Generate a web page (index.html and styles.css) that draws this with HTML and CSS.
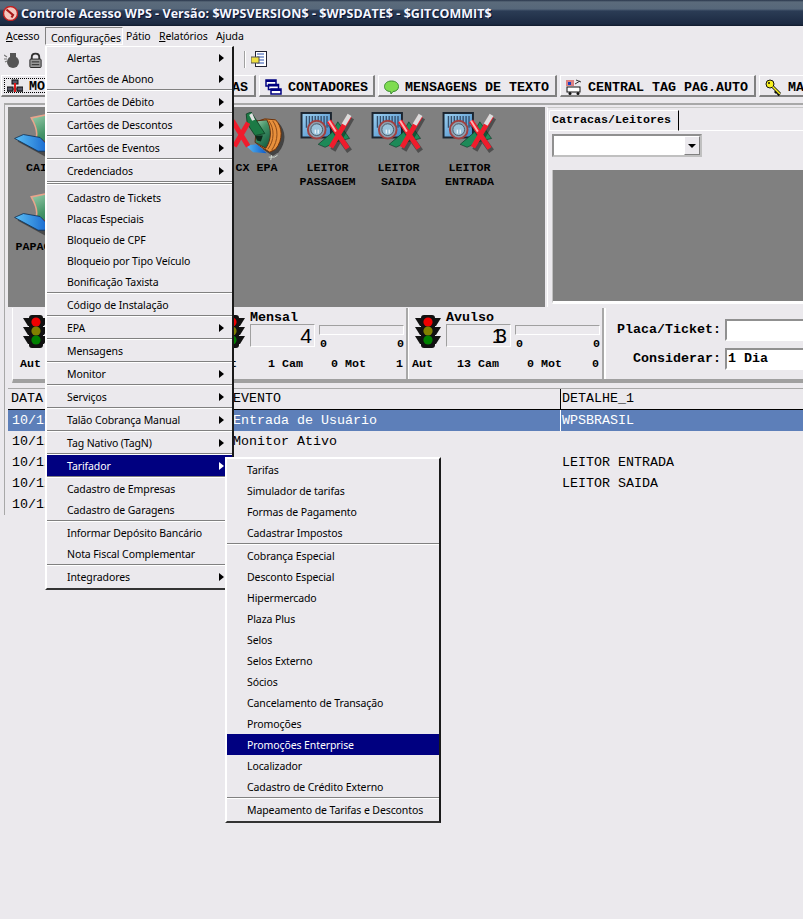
FILE: index.html
```html
<!DOCTYPE html>
<html lang="pt-BR">
<head>
<meta charset="utf-8">
<title>Controle Acesso WPS</title>
<link rel="stylesheet" href="styles.css">
</head>
<body>
<svg class="defs" width="0" height="0" aria-hidden="true">
  <defs>
    <linearGradient id="g-card" x1="0" y1="0" x2=".6" y2="1"><stop offset="0" stop-color="#9fcfb0"/><stop offset=".45" stop-color="#459468"/><stop offset="1" stop-color="#176244"/></linearGradient>
    <linearGradient id="g-blue" x1="0" y1="0" x2="1" y2="0"><stop offset="0" stop-color="#5cc0f4"/><stop offset="1" stop-color="#0c58c8"/></linearGradient>
    <linearGradient id="g-box" x1="0" y1="0" x2="1" y2="1"><stop offset="0" stop-color="#9fd0f0"/><stop offset="1" stop-color="#3f88c8"/></linearGradient>
    <symbol id="i-card" viewBox="0 0 60 50">
      <path d="M3 30 L12 26 L34 32 L48 46 L32 46 Z" fill="#111" opacity=".5"/>
      <path d="M17 6 L36 2 L62 3 L62 46 L38 38 L22 26 C24 20 21 13 17 6 Z" fill="url(#g-card)" stroke="#e8a48c" stroke-width="1.600"/>
      <path d="M22 26 L40 36 L50 43" fill="none" stroke="#e83c18" stroke-width="2"/>
      <path d="M0 27 L9 23 L26 26 L40 40 L24 40 Z" fill="url(#g-blue)" stroke="#0a2a50" stroke-width=".8"/>
    </symbol>
    <symbol id="i-cx" viewBox="0 0 60 50">
      <path d="M33 10 L38 8 L50 9 C57 16 59 28 50 39 L44 43 L34 36 Z" fill="#111" opacity=".55" transform="translate(2 2)"/>
      <path d="M32 9 L38 7 L49 8 C56 15 57 28 49 38 L43 41 L30 33 Z" fill="#e8903c" stroke="#6a3008" stroke-width="1"/>
      <path d="M46 9 C52 17 52 29 45 39 M42 9 C48 17 48 29 41 38" fill="none" stroke="#8a4a18" stroke-width="1"/>
      <path d="M30 9 L40 8 C45 17 45 28 39 37 L28 31 Z" fill="url(#g-card)" stroke="#5a2a10" stroke-width="1"/>
      <path d="M28 24 L36 24 L34 30 L30 29 Z" fill="#0c2a1c"/>
      <path d="M18 34 L30 33 L40 42 L26 41 Z" fill="url(#g-blue)"/>
      <path d="M19 2 L24 0 L38 22 L28 24 L20 12 Z" fill="#1c7a45" stroke="#0c3a20" stroke-width=".8"/>
      <path d="M22 3 L25 1 L28 8 L25 9 Z" fill="#e0e0e0"/>
      <path d="M5 9 L21 35 M21 11 L7 35" stroke="#f01c2c" stroke-width="5" fill="none"/>
      <path d="M42 46 L48 46 M45 44 L44 49 M48 46 L51 44" stroke="#cfd8cf" stroke-width="1" fill="none"/>
    </symbol>
    <symbol id="i-leitor" viewBox="0 0 60 50">
      <rect x="3" y="1" width="30" height="25" fill="url(#g-box)" stroke="#1c2530" stroke-width="2"/>
      <path d="M8 4 V16 M11 4 V16 M14 4 V16 M17 4 V16 M20 4 V16 M23 4 V16 M26 4 V16 M29 4 V16" stroke="#35506e" stroke-width="1.400"/>
      <circle cx="18.500" cy="18" r="9" fill="#8fa0b0" stroke="#a04040" stroke-width="2"/>
      <circle cx="18.500" cy="18" r="6" fill="#9cc4dc" stroke="#4a5a68"/>
      <path d="M17 18 V22 M20 18 V22" stroke="#fff"/>
      <path d="M20 33 L34 21 L40 10 L52 27 L40 30 L27 36 Z" fill="#1d8a58" stroke="#0a3020" stroke-width=".6"/>
      <path d="M54 6 L35 39 M32 12 L52 40" stroke="#111" stroke-width="6" opacity=".45" fill="none"/>
      <path d="M52 4 L33 36 M31 9 L50 37" stroke="#f01c2c" stroke-width="5" fill="none"/>
      <path d="M52 3 L46 13" stroke="#dcdcdc" stroke-width="4.500" fill="none"/>
      <path d="M31 9 L38 20" stroke="#ffb0b0" stroke-width="2" fill="none"/>
    </symbol>
    <symbol id="i-light" viewBox="0 0 26 33">
      <g fill="#111">
        <path d="M0 3 H26 L21 11 H5 Z M0 12 H26 L21 20 H5 Z M0 21 H26 L21 29 H5 Z"/>
        <rect x="6" y="0" width="14" height="33" rx="3"/>
      </g>
      <circle cx="13" cy="7" r="4.600" fill="#f00000"/>
      <circle cx="13" cy="16" r="4.600" fill="#808000"/>
      <circle cx="13" cy="25" r="4.600" fill="#008000"/>
    </symbol>
  </defs>
</svg>

<div class="window">
  <header class="titlebar">
    <svg class="title-icon" width="15" height="15" viewBox="0 0 15 15"><circle cx="7.500" cy="7.500" r="7" fill="#f4c8c0" stroke="#c02020" stroke-width="1.400"/><path d="M3.500 3.500 L10 9 L8.500 11.500" fill="none" stroke="#a81818" stroke-width="2.200"/></svg>
    <span class="title-text">Controle Acesso WPS - Versão: $WPSVERSION$ - $WPSDATE$ - $GITCOMMIT$</span>
  </header>

  <nav class="menubar">
    <span class="top-item item-acesso"><u>A</u>cesso</span>
    <span class="top-item item-open">Configurações</span>
    <span class="top-item item-patio">Pátio</span>
    <span class="top-item item-rel"><u>R</u>elatórios</span>
    <span class="top-item item-ajuda">Ajuda</span>
  </nav>

  <div class="toolbar">
    <svg class="tool" width="16" height="16" viewBox="0 0 16 16"><ellipse cx="9" cy="10" rx="6" ry="6" fill="#555"/><rect x="6" y="1" width="6" height="5" fill="#555"/><path d="M0 3 L3 5 M0 7 H3 M1 10 L3 9" stroke="#777" stroke-width="1.200"/></svg>
    <svg class="tool tool-lock" width="15" height="16" viewBox="0 0 16 16"><path d="M4 8 V5 C4 0 12 0 12 5 V8" fill="none" stroke="#333" stroke-width="2"/><rect x="2" y="7" width="12" height="9" rx="1" fill="#999" stroke="#222"/><path d="M4 10 H12 M4 13 H12" stroke="#222"/></svg>
    <span class="tool-gap"></span>
    <span class="tool-sep"></span>
    <svg class="tool" width="17" height="17" viewBox="0 0 17 17"><rect x="4.500" y=".5" width="11" height="15" fill="#fff" stroke="#223"/><path d="M6 3 H13 M6 6 H13 M6 9 H13 M6 12 H13" stroke="#2a50b0"/><rect x="0" y="6" width="8" height="6" fill="#f0e040" stroke="#555"/></svg>
  </div>

  <div class="tabs">
    <div class="tab tab-active"><span class="tab-focus">
      <svg class="tab-icon" width="16" height="16" viewBox="0 0 16 16"><path d="M5 4 H11 M2 10 H14 M8 4 V14" stroke="#222" fill="none"/><rect x="5" y="1" width="6" height="4" fill="#556" stroke="#111"/><rect x="0" y="8" width="6" height="4" fill="#556" stroke="#111"/><rect x="10" y="8" width="6" height="4" fill="#556" stroke="#111"/><rect x="0" y="13" width="6" height="3" fill="#556" stroke="#111"/><rect x="10" y="13" width="6" height="3" fill="#556" stroke="#111"/><rect x="7" y="4" width="2" height="12" fill="#e01818"/></svg>
      MONITOR</span></div>
    <div class="tab tab-wide">CÂMERAS</div>
    <div class="tab tab-tight">
      <svg class="tab-icon" width="17" height="16" viewBox="0 0 17 16"><rect x="1" y="1" width="10" height="6" fill="#fff" stroke="#000080" stroke-width="1.500"/><rect x="3.500" y="5.500" width="10" height="5" fill="#fff" stroke="#000080" stroke-width="1.500"/><rect x="6" y="10" width="10" height="5" fill="#fff" stroke="#000080" stroke-width="1.500"/><path d="M1 2 H11 M4 6.500 H14 M6 11 H16" stroke="#000080" stroke-width="2"/></svg>
      CONTADORES</div>
    <div class="tab">
      <svg class="tab-icon" width="15" height="15" viewBox="0 0 15 15"><path d="M7.500 1 C12 1 14.500 3.500 14.500 6.500 C14.500 9.500 12 11.500 9 11.500 L7 14 L6.500 11.500 C3 11.500 .5 9.500 .5 6.500 C.5 3.500 3 1 7.500 1 Z" fill="#7fdc50" stroke="#3a8a30"/></svg>
      MENSAGENS DE TEXTO</div>
    <div class="tab">
      <svg class="tab-icon" width="16" height="16" viewBox="0 0 16 16"><path d="M1 1 V7 M3 1 V7 M5 1 V7 M7 1 V7" stroke="#d01818"/><rect x="2" y="3" width="3" height="3" fill="#1840c0"/><path d="M10 1 L15 3 M9 5 L14 2" stroke="#333"/><rect x="1" y="8" width="13" height="5" fill="#fff" stroke="#111"/><circle cx="4" cy="14.500" r="1.500" fill="#111"/><circle cx="12" cy="14.500" r="1.500" fill="#111"/></svg>
      CENTRAL TAG PAG.AUTO</div>
    <div class="tab">
      <svg class="tab-icon" width="17" height="17" viewBox="0 0 17 17"><circle cx="5" cy="5" r="4" fill="#f8f020" stroke="#111"/><circle cx="4" cy="4" r="1" fill="#111"/><path d="M7.500 7.500 L15 15 M12 12 L10 14 M14.500 14.500 L12.500 16" stroke="#111" stroke-width="3"/><path d="M7.500 7.500 L15 15" stroke="#f8f020" stroke-width="1.500"/></svg>
      MANUTENÇÃO</div>
  </div>

  <main class="workspace">
    <section class="upper">
      <div class="gray-panel">
        <div class="app"><svg class="app-icon"><use href="#i-card"/></svg><span class="app-label">CAIXA</span></div>
        <div class="app"><svg class="app-icon"><use href="#i-card"/></svg><span class="app-label">CAIXA 2</span></div>
        <div class="app"><svg class="app-icon"><use href="#i-card"/></svg><span class="app-label">CAIXA 3</span></div>
        <div class="app"><svg class="app-icon"><use href="#i-cx"/></svg><span class="app-label">CX EPA</span></div>
        <div class="app"><svg class="app-icon"><use href="#i-leitor"/></svg><span class="app-label">LEITOR PASSAGEM</span></div>
        <div class="app"><svg class="app-icon"><use href="#i-leitor"/></svg><span class="app-label">LEITOR SAIDA</span></div>
        <div class="app"><svg class="app-icon"><use href="#i-leitor"/></svg><span class="app-label">LEITOR ENTRADA</span></div>
        <div class="app"><svg class="app-icon"><use href="#i-card"/></svg><span class="app-label">PAPAGAIO</span></div>
      </div>
      <aside class="side">
        <div class="side-tabs"><span class="side-tab">Catracas/Leitores</span></div>
        <div class="combo"><span class="combo-field"></span><span class="combo-btn"></span></div>
        <div class="side-box"></div>
      </aside>
    </section>

    <section class="stats">
      <div class="card">
        <div class="card-top">
          <svg class="light"><use href="#i-light"/></svg>
          <div class="meter"><div class="meter-title">Isento</div><div class="meter-box">0</div></div>
          <div class="bar-col"><div class="bar"></div><div class="bar-scale"><span>0</span><span>0</span></div></div>
        </div>
        <div class="card-row"><span>Aut</span><span class="num">0 Cam</span><span class="num">0 Mot</span><span class="num">0</span></div>
      </div>
      <div class="card">
        <div class="card-top">
          <svg class="light"><use href="#i-light"/></svg>
          <div class="meter"><div class="meter-title">Mensal</div><div class="meter-box">4</div></div>
          <div class="bar-col"><div class="bar"></div><div class="bar-scale"><span>0</span><span>0</span></div></div>
        </div>
        <div class="card-row"><span>Aut</span><span class="num">1 Cam</span><span class="num">0 Mot</span><span class="num">1</span></div>
      </div>
      <div class="card">
        <div class="card-top">
          <svg class="light"><use href="#i-light"/></svg>
          <div class="meter"><div class="meter-title">Avulso</div><div class="meter-box meter-tight">13</div></div>
          <div class="bar-col"><div class="bar"></div><div class="bar-scale"><span>0</span><span>0</span></div></div>
        </div>
        <div class="card-row"><span>Aut</span><span class="num">13 Cam</span><span class="num">0 Mot</span><span class="num">0</span></div>
      </div>
      <div class="search">
        <label class="search-label">Placa/Ticket:</label><div class="field"></div>
        <label class="search-label">Considerar:</label><div class="field">1 Dia</div>
      </div>
    </section>

    <section class="log">
      <div class="log-row log-head"><span class="c-date">DATA</span><span class="c-event">EVENTO</span><span class="c-det">DETALHE_1</span></div>
      <div class="log-row log-sel"><span class="c-date">10/12/2013</span><span class="c-event">Entrada de Usuário</span><span class="c-det">WPSBRASIL</span></div>
      <div class="log-row"><span class="c-date">10/12/2013</span><span class="c-event">Monitor Ativo</span><span class="c-det"></span></div>
      <div class="log-row"><span class="c-date">10/12/2013</span><span class="c-event"></span><span class="c-det">LEITOR ENTRADA</span></div>
      <div class="log-row"><span class="c-date">10/12/2013</span><span class="c-event"></span><span class="c-det">LEITOR SAIDA</span></div>
      <div class="log-row"><span class="c-date">10/12/2013</span><span class="c-event"></span><span class="c-det"></span></div>
    </section>
  </main>
</div>

<div class="menu menu-main">
  <div class="mi sub">Alertas</div>
  <div class="mi sub">Cartões de Abono</div>
  <div class="ms"></div>
  <div class="mi sub">Cartões de Débito</div>
  <div class="ms"></div>
  <div class="mi sub">Cartões de Descontos</div>
  <div class="ms"></div>
  <div class="mi sub">Cartões de Eventos</div>
  <div class="ms"></div>
  <div class="mi sub">Credenciados</div>
  <div class="ms ms-double"></div>
  <div class="ms ms-double-b"></div>
  <div class="mi">Cadastro de Tickets</div>
  <div class="mi">Placas Especiais</div>
  <div class="mi">Bloqueio de CPF</div>
  <div class="mi">Bloqueio por Tipo Veículo</div>
  <div class="mi">Bonificação Taxista</div>
  <div class="ms"></div>
  <div class="mi">Código de Instalação</div>
  <div class="ms"></div>
  <div class="mi sub">EPA</div>
  <div class="ms"></div>
  <div class="mi">Mensagens</div>
  <div class="ms"></div>
  <div class="mi sub">Monitor</div>
  <div class="ms"></div>
  <div class="mi sub">Serviços</div>
  <div class="ms"></div>
  <div class="mi sub">Talão Cobrança Manual</div>
  <div class="ms"></div>
  <div class="mi sub">Tag Nativo (TagN)</div>
  <div class="ms"></div>
  <div class="mi sub hl">Tarifador</div>
  <div class="ms"></div>
  <div class="mi">Cadastro de Empresas</div>
  <div class="mi">Cadastro de Garagens</div>
  <div class="ms"></div>
  <div class="mi">Informar Depósito Bancário</div>
  <div class="mi">Nota Fiscal Complementar</div>
  <div class="ms"></div>
  <div class="mi sub">Integradores</div>
</div>

<div class="menu menu-sub">
  <div class="mi">Tarifas</div>
  <div class="mi">Simulador de tarifas</div>
  <div class="mi">Formas de Pagamento</div>
  <div class="mi">Cadastrar Impostos</div>
  <div class="ms"></div>
  <div class="mi">Cobrança Especial</div>
  <div class="mi">Desconto Especial</div>
  <div class="mi">Hipermercado</div>
  <div class="mi">Plaza Plus</div>
  <div class="mi">Selos</div>
  <div class="mi">Selos Externo</div>
  <div class="mi">Sócios</div>
  <div class="mi">Cancelamento de Transação</div>
  <div class="mi">Promoções</div>
  <div class="mi hl">Promoções Enterprise</div>
  <div class="mi">Localizador</div>
  <div class="mi">Cadastro de Crédito Externo</div>
  <div class="ms"></div>
  <div class="mi">Mapeamento de Tarifas e Descontos</div>
</div>
</body>
</html>
```
FILE: styles.css
```css
* { box-sizing: border-box; }
html, body { margin: 0; padding: 0; }
body {
  position: relative;
  width: 803px;
  height: 919px;
  overflow: hidden;
  background: #ebe9ed;
  color: #000;
  font-family: "Liberation Mono", monospace;
  font-size: 13.33px;
}
.defs { position: absolute; }

.titlebar {
  height: 26px;
  display: flex;
  align-items: center;
  padding-left: 3px;
  background: linear-gradient(#28354a 0, #5b6b7b 2px, #56677a 9px, #2b3c55 11px, #1c2a42 24px, #101a2c 26px);
}
.title-icon { flex: none; margin-right: 3px; }
.title-text {
  font-family: "Open Sans", sans-serif;
  font-weight: 700;
  font-size: 12.5px;
  letter-spacing: .05px;
  color: #f4f6ff;
  white-space: nowrap;
  text-shadow: 1px 1px 0 #0a1030;
}

.menubar {
  height: 20px;
  display: flex;
  align-items: center;
  font-family: "Noto Sans", sans-serif;
  font-size: 10.5px;
  letter-spacing: -.1px;
  white-space: nowrap;
}
.top-item { display: block; line-height: 18px; }
.item-acesso { margin-left: 6px; width: 39px; }
.item-open {
  width: 78px;
  height: 18px;
  padding: 1px 0 0 5px;
  border: 1px solid;
  border-color: #808080 #fff #fff #808080;
}
.item-patio { margin-left: 3px; width: 33px; }
.item-rel { width: 57px; }

.toolbar {
  height: 29px;
  display: flex;
  align-items: center;
  padding: 0 0 2px 4px;
}
.tool { flex: none; }
.tool-lock { margin-left: 8px; }
.tool-gap { width: 201px; }
.tool-sep { width: 2px; height: 17px; margin-right: 5px; border-left: 1px solid #a0a0a0; border-right: 1px solid #fff; }

.tabs {
  height: 22px;
  display: flex;
  gap: 3px;
  padding-left: 1px;
  white-space: nowrap;
  font-weight: 700;
  font-size: 13.33px;
}
.tab {
  flex: none;
  display: flex;
  align-items: center;
  padding: 3px 6px 0 5px;
  border: 1px solid;
  border-color: #fff #808080 #808080 #fff;
  border-width: 1px 2px 2px 1px;
}
.tab-tight { padding-right: 5px; }
.tab-icon { flex: none; margin-right: 6px; }
.tab-active { width: 92px; padding: 2px; }
.tab-focus { display: flex; align-items: center; width: 100%; height: 100%; border: 1px dotted #000; padding: 2px 0 0 2px; overflow: hidden; }
.tab-wide { width: 160px; justify-content: flex-end; }

.workspace {
  margin: 6px 0 0 4px;
  padding: 2px 0 0 3px;
  border-top: 2px solid #a8a8a8;
  border-left: 1px solid #a8a8a8;
}
.upper { display: flex; height: 200px; gap: 3px; }
.gray-panel {
  width: 537px;
  flex: none;
  background: #808080;
  display: grid;
  grid-template-columns: repeat(7, 71px);
  grid-auto-rows: 79px;
  overflow: hidden;
}
.app { display: flex; flex-direction: column; align-items: center; padding-top: 5px; text-align: center; }
.app-icon { width: 60px; height: 49px; flex: none; }
.app-label { width: 62px; font-weight: 700; font-size: 11.67px; line-height: 14px; }
.side { flex: 1; padding-left: 1px; border-top: 1px solid #c8c8c8; border-left: 1px solid #fff; margin-left: -1px; }
.side-tabs { height: 23px; padding-top: 2px; border-bottom: 1px solid #fff; }
.side-tab {
  display: block;
  width: 130px;
  height: 21px;
  padding: 2px 0 0 2px;
  border: 1px solid;
  border-color: #fff #000 transparent #fff;
  border-radius: 2px 0 0 0;
  font-weight: 700;
  font-size: 11.67px;
  line-height: 14px;
}
.combo {
  width: 150px;
  height: 23px;
  margin: 3px 0 0 3px;
  display: flex;
  border: 2px solid;
  border-color: #909090 #c0c0c0 #c0c0c0 #909090;
  background: #fff;
}
.combo-field { flex: 1; }
.combo-btn {
  width: 16px;
  position: relative;
  background: #ebe9ed;
  border: 1px solid;
  border-color: #fff #808080 #808080 #fff;
}
.combo-btn::after {
  content: "";
  position: absolute;
  left: 3px;
  top: 7px;
  border: 4px solid transparent;
  border-top: 4px solid #000;
}
.side-box { height: 134px; margin: 13px 0 0 3px; background: #808080; border-bottom: 3px solid #fff; border-left: 1px solid #c0c0c0; }

.stats {
  display: flex;
  height: 75px;
  margin: 1px 0 0 4px;
  padding-left: 3px;
  border-left: 1px solid #fff;
  border-bottom: 4px solid #a0a0a0;
}
.card {
  width: 196px;
  flex: none;
  display: flex;
  flex-direction: column;
  border-right: 2px solid #a8a8a8;
  box-shadow: 1px 0 0 #fff;
}
.card-top { display: flex; padding: 3px 0 0 7px; height: 42px; }
.light { width: 26px; height: 33px; flex: none; margin: 4px 5px 0 0; }
.meter { width: 65px; flex: none; }
.meter-title { height: 13px; font-weight: 700; font-size: 13.33px; line-height: 13px; }
.meter-box {
  height: 23px;
  padding-right: 2px;
  text-align: right;
  font-family: "Liberation Sans", sans-serif;
  font-size: 21px;
  line-height: 21px;
  border: 1px solid;
  border-color: #a0a0a0 #fff #fff #a0a0a0;
}
.meter-tight { letter-spacing: -8px; padding-right: 11px; }
.bar-col { width: 85px; flex: none; margin-left: 4px; padding-top: 14px; }
.bar { height: 10px; border: 1px solid; border-color: #a0a0a0 #fff #fff #a0a0a0; }
.bar-scale { display: flex; justify-content: space-between; margin-top: 3px; font-weight: 700; font-size: 11.67px; line-height: 12px; padding: 0 0 0 1px; }
.card-row {
  display: grid;
  grid-template-columns: 20px 67px 63px 37px;
  margin-top: 7px;
  padding-left: 4px;
  font-weight: 700;
  font-size: 11.67px;
  line-height: 14px;
  white-space: nowrap;
}
.num { text-align: right; }
.search {
  flex: 1;
  display: grid;
  grid-template-columns: 115px 1fr;
  column-gap: 4px;
  row-gap: 7px;
  grid-auto-rows: 22px;
  padding-top: 11px;
  border-left: 1px solid #fff;
  margin-left: 1px;
  font-weight: 700;
}
.search-label { text-align: right; line-height: 22px; white-space: nowrap; }
.field {
  background: #fff;
  border: 2px solid;
  border-color: #909090 #fff #fff #909090;
  padding-left: 1px;
  line-height: 18px;
  width: 100px;
}

.log { margin-top: 5px; border-top: 1px solid #a8a8a8; }
.log-row { display: flex; height: 21px; line-height: 21px; }
.log-head { height: 21px; border-bottom: 1px solid #000; line-height: 20px; }
.log-sel { background: #5d7fb9; color: #fff; }
.c-date { width: 224px; flex: none; padding-left: 4px; }
.log-head .c-date { padding-left: 3px; }
.c-event { width: 328px; flex: none; padding-left: 1px; }
.c-det { flex: 1; padding-left: 1px; }
.log-head .c-det { border-left: 1px solid #000; }
.log-sel .c-det { border-left: 1px solid #fff; }
.log-row:not(.log-head):not(.log-sel) .c-det { padding-left: 2px; }

.menu {
  position: absolute;
  background: #ebe9ed;
  border: 2px solid;
  border-color: #fff #1a1a1a #333 #fff;
  font-family: "Noto Sans", sans-serif;
  font-size: 10.5px;
  letter-spacing: -.1px;
  color: #000;
  white-space: nowrap;
}
.menu-main { left: 45px; top: 46px; width: 189px; padding-bottom: 1px; border-top-width: 1px; }
.menu-sub { left: 225px; top: 457px; width: 216px; padding-bottom: 1px; }
.mi { position: relative; height: 21px; line-height: 20px; padding: 1px 0 0 20px; }
.sub::after {
  content: "";
  position: absolute;
  right: 8px;
  top: 7px;
  border: 4px solid transparent;
  border-left: 5px solid #000;
  border-right-width: 0;
}
.hl { background: #000080; color: #fff; }
.hl.sub::after { border-left-color: #fff; }
.ms { height: 2px; border-top: 1px solid #808080; border-bottom: 1px solid #fff; }
.ms-double-b { margin-bottom: 2px; }
```
